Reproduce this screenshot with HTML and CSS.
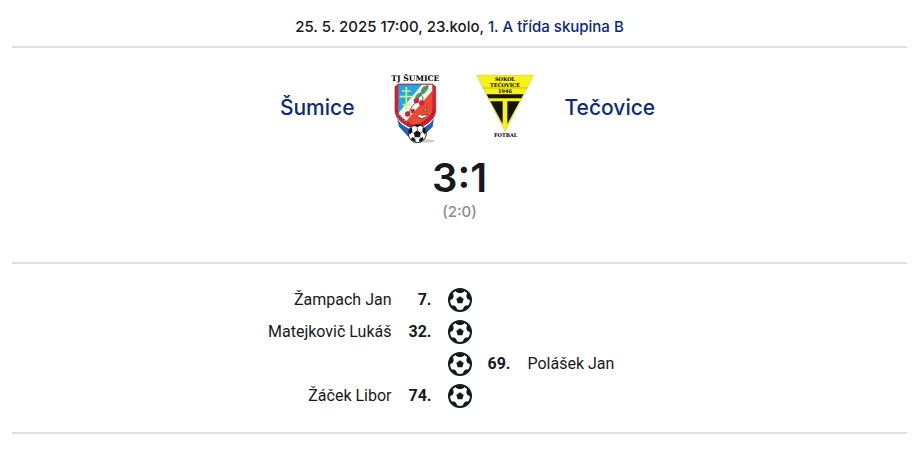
FILE: index.html
```html
<!DOCTYPE html>
<html lang="cs">
<head>
<meta charset="utf-8">
<meta name="viewport" content="width=device-width, initial-scale=1">
<title>Šumice – Tečovice</title>
<link rel="stylesheet" href="styles.css">
</head>
<body>
<svg class="defs" aria-hidden="true">
  <symbol id="goal" viewBox="0 0 24 24">
    <circle cx="12" cy="12" r="11" fill="#fff" stroke="#16191c" stroke-width="2"/>
    <path fill="#16191c" d="M12 8.200l3.700 2.700-1.400 4.400H9.700l-1.400-4.400zM7.500 1h9l-.7 3-2.300.9h-3L8.200 4zM1 12.500V8l2.500-3.500L5.300 6l.4 2.500L4.600 11zM23 12.500V8l-2.500-3.500L18.700 6l-.4 2.500 1.100 2.500zM4.500 21L2.800 17.600l3.200-.2 2 1.300 1 2.200-.5 1.800zM19.500 21l1.700-3.400-3.200-.2-2 1.300-1 2.200.5 1.800z"/>
  </symbol>
</svg>
<main class="match">
  <header class="info">25. 5. 2025 17:00, 23.kolo, <a href="#">1. A třída skupina B</a></header>
  <section class="summary">
    <div class="teams">
      <a class="team home" href="#">Šumice</a>
      <div class="crests">
        <svg class="crest" viewBox="0 0 216 216" role="img" aria-label="TJ Šumice">
          <text class="crest-title" x="109" y="27">TJ ŠUMICE</text>
          <path fill="#1d62b5" d="M54 138q12 24 55 36 42-12 56-36l-4 26-28 28H86l-26-28z"/>
          <path fill="#fff" d="M53 132q14 26 56 39 42-13 58-39l-3 8q-14 24-55 37-41-13-54-37z"/>
          <path fill="#d71f32" stroke="#8d2834" stroke-width="2" d="M48 43q7-1 9-7h104q2 6 9 7v76q-4 32-61 54-57-22-61-54z"/>
          <path fill="#19a9e5" d="M58 38h74l-74 91z"/>
          <path fill="#f4f2ea" d="M128 38h32v20l-77 94-25-24v-4z"/>
          <path fill="#ee4932" d="M160 56v66q-12 24-51 40-18-6-29-13z"/>
          <path fill="none" stroke="#8b1525" stroke-width="4" stroke-dasharray="5 3" d="M53 116q14 30 56 48 40-18 56-48"/>
          <path fill="none" stroke="#d8ed6b" stroke-width="5" d="M82 45v65M69 57h26M62 74h40M71 98h22"/>
          <path fill="#5d9875" d="M125 57q5-18 24-18 1 17-18 29zM108 77q4-15 22-16-3 16-17 20z"/>
          <path fill="none" stroke="#467b50" stroke-width="3" d="M145 45q-25 16-30 44-17 8-31 43M124 65q12 10 7 26"/>
          <g fill="#cc243c"><circle cx="112" cy="86" r="8"/><circle cx="128" cy="93" r="8"/><circle cx="86" cy="126" r="8"/><circle cx="101" cy="117" r="7"/></g>
          <path fill="#fff" stroke="#4e2525" stroke-width="2" d="M114 134q8-12 14-4 6 1 19-4-7 14-20 13zM134 117l7-11 2 10z"/>
          <ellipse cx="139" cy="207" rx="28" ry="5" fill="#d3cbc4"/>
          <circle cx="115" cy="185" r="27" fill="#fff" stroke="#272727" stroke-width="3"/>
          <path fill="#151515" d="M115 175l11 8-4 13h-14l-4-13zM104 160q11-5 22 0l-11 6zM89 180l3-11 7-2 1 12-8 9zM141 180l-3-11-7-2-1 12 8 9zM96 202l3-7 10 6 1 9q-8 0-14-8zM134 202l-3-7-10 6-1 9q8 0 14-8z"/>
          <path fill="none" stroke="#333" stroke-width="2" d="M115 175v-9M104 183l-5-4M126 183l5-4M108 196l-5 3M122 196l5 3"/>
        </svg>
        <svg class="crest" viewBox="0 0 216 216" role="img" aria-label="Sokol Tečovice">
          <path fill="#f9f219" stroke="#d4ce21" stroke-width="2" d="M23 10h170l-85 168z"/>
          <path stroke="#a8a31b" stroke-width="2" d="M41 48h134"/>
          <path fill="#151507" d="M53 67h110l-6 12H59zM64 88h37v68zM152 88h-37v68z"/>
          <g class="crest-text">
            <text x="108" y="27">SOKOL</text>
            <text x="108" y="45">TEČOVICE</text>
            <text x="108" y="63">1946</text>
            <text x="110" y="194">FOTBAL</text>
          </g>
        </svg>
      </div>
      <a class="team" href="#">Tečovice</a>
    </div>
    <div class="score">3:1</div>
    <div class="half">(2:0)</div>
  </section>
  <ol class="events">
    <li class="event"><span class="name">Žampach Jan</span><b class="minute">7.</b><svg class="ball" role="img" aria-label="Gól"><use href="#goal"/></svg></li>
    <li class="event"><span class="name">Matejkovič Lukáš</span><b class="minute">32.</b><svg class="ball" role="img" aria-label="Gól"><use href="#goal"/></svg></li>
    <li class="event away"><svg class="ball" role="img" aria-label="Gól"><use href="#goal"/></svg><b class="minute">69.</b><span class="name">Polášek Jan</span></li>
    <li class="event"><span class="name">Žáček Libor</span><b class="minute">74.</b><svg class="ball" role="img" aria-label="Gól"><use href="#goal"/></svg></li>
  </ol>
</main>
</body>
</html>
```
FILE: styles.css
```css
* {
  box-sizing: border-box;
}

body {
  margin: 0;
  background: #fff;
  color: #16191c;
  font-family: Inter, sans-serif;
}

a {
  color: #0a2a80;
  text-decoration: none;
}

.defs {
  display: none;
}

.match {
  margin: 0 13px 0 12px;
}

.info,
.summary,
.events {
  border-bottom: 2px solid #dddee4;
}

.info {
  padding: 17px 0 9px;
  font-size: 15px;
  font-weight: 500;
  line-height: 20px;
  text-align: center;
}

.summary {
  padding: 24px 0 40px;
  text-align: center;
}

.teams {
  display: grid;
  grid-template-columns: 1fr auto 1fr;
  align-items: center;
  gap: 24px;
  font-size: 21px;
  font-weight: 500;
  line-height: 24px;
  text-align: left;
}

.home {
  text-align: right;
}

.crests {
  display: flex;
  gap: 18px;
}

.crest {
  display: block;
  width: 72px;
  height: 72px;
}

.crest-title {
  font: bold 23px "DejaVu Serif", serif;
  text-anchor: middle;
}

.crest-text {
  font: bold 15px "DejaVu Serif", serif;
  text-anchor: middle;
}

.score {
  margin-top: 10px;
  font-size: 40px;
  font-weight: 600;
  line-height: 48px;
}

.half {
  color: #8b8e93;
  font-size: 15px;
  font-weight: 500;
  line-height: 20px;
}

.events {
  margin: 0;
  padding: 20px 0;
  list-style: none;
  font-family: Roboto, sans-serif;
  font-size: 16px;
  line-height: 32px;
}

.event {
  display: grid;
  grid-template-columns: 1fr 40px 56px 40px 1fr;
  align-items: center;
  text-align: right;
}

.away {
  text-align: left;
}

.away .ball {
  grid-column: 3;
}

.ball {
  width: 24px;
  height: 24px;
  justify-self: center;
}

.minute {
  font-weight: 700;
}
```
